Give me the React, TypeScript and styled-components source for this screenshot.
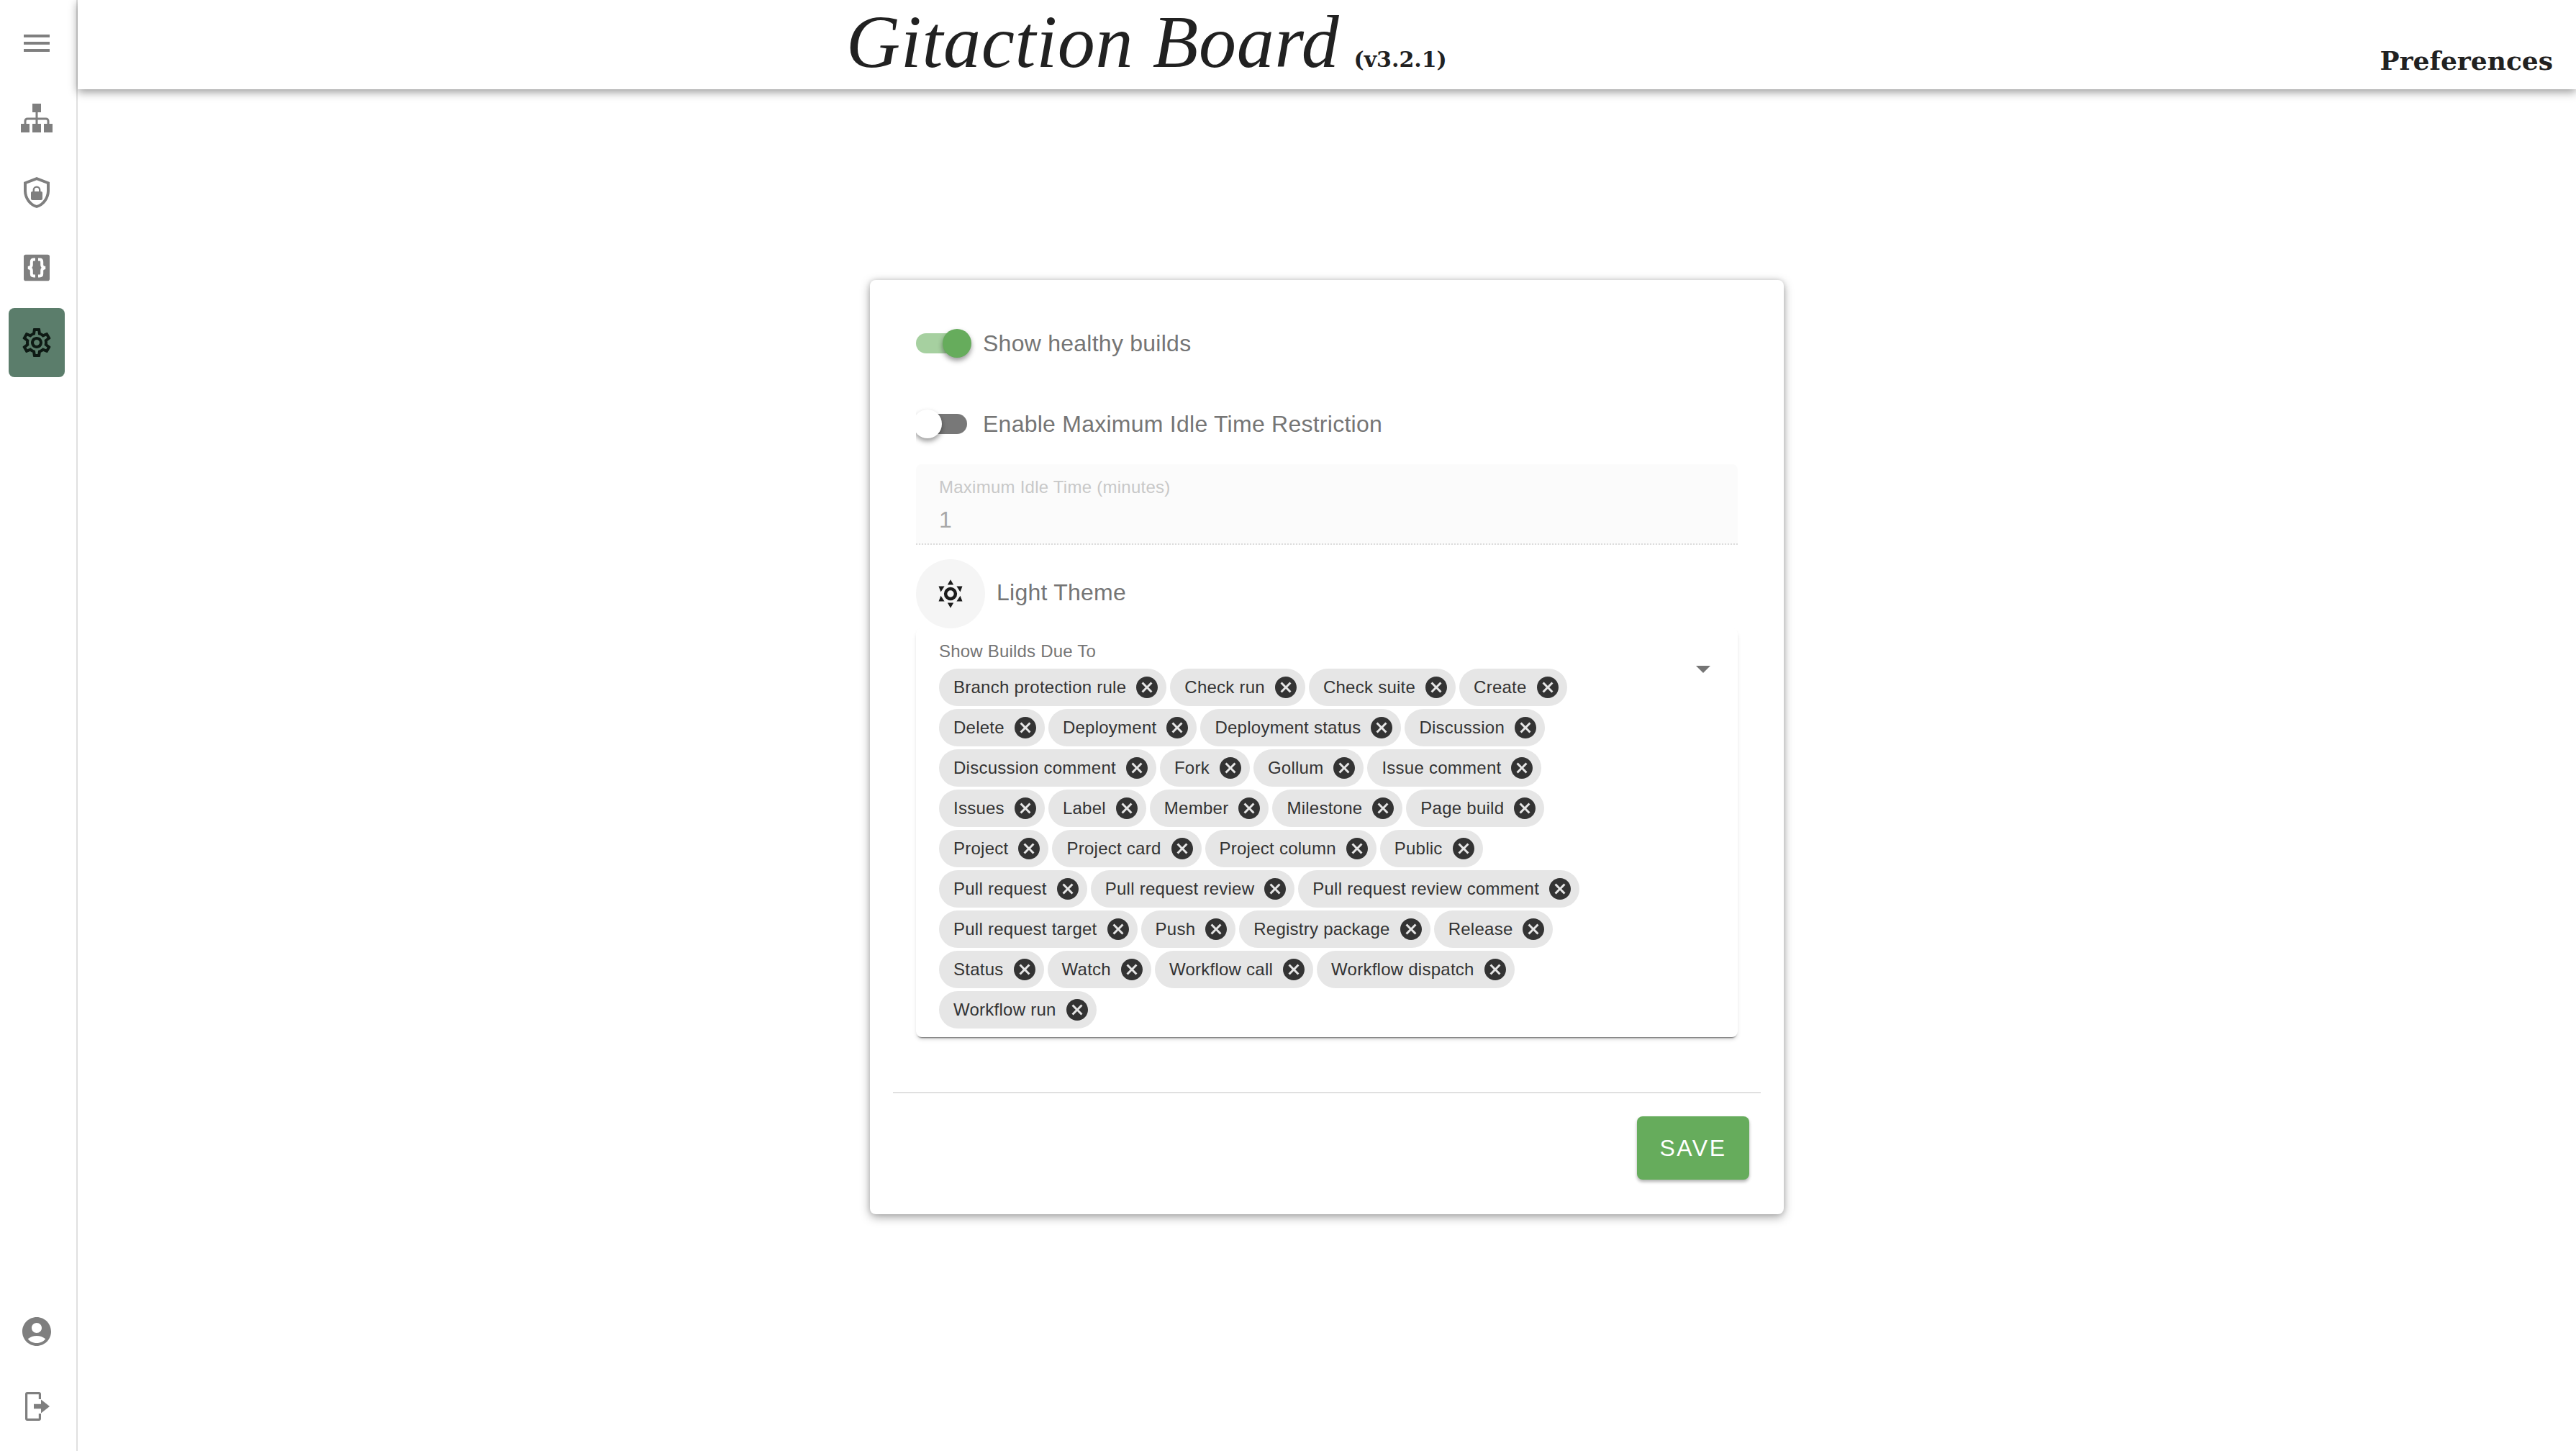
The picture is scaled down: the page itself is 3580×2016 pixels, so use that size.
import React from 'react';
import styled, { createGlobalStyle } from 'styled-components';
import {
  MdMenu,
  MdOutlineSettings,
  MdAccountCircle,
  MdCancel,
} from 'react-icons/md';

const GlobalStyle = createGlobalStyle`
  html, body {
    margin: 0;
    padding: 0;
    height: 100%;
    background: #fff;
    font-family: "Liberation Sans", Arial, sans-serif;
  }
`;

const EVENTS = [
  'Branch protection rule',
  'Check run',
  'Check suite',
  'Create',
  'Delete',
  'Deployment',
  'Deployment status',
  'Discussion',
  'Discussion comment',
  'Fork',
  'Gollum',
  'Issue comment',
  'Issues',
  'Label',
  'Member',
  'Milestone',
  'Page build',
  'Project',
  'Project card',
  'Project column',
  'Public',
  'Pull request',
  'Pull request review',
  'Pull request review comment',
  'Pull request target',
  'Push',
  'Registry package',
  'Release',
  'Status',
  'Watch',
  'Workflow call',
  'Workflow dispatch',
  'Workflow run',
];

function SitemapIcon() {
  return (
    <svg width="44" height="40" viewBox="0 0 44 40" fill="#7f7f7f">
      <rect x="16" y="0" width="12" height="12" />
      <rect x="0" y="28" width="12" height="12" />
      <rect x="16" y="28" width="12" height="12" />
      <rect x="32" y="28" width="12" height="12" />
      <path
        d="M22 12v16M6 28v-4a3 3 0 0 1 3-3h26a3 3 0 0 1 3 3v4"
        fill="none"
        stroke="#7f7f7f"
        strokeWidth="3"
      />
    </svg>
  );
}

function ShieldLockIcon() {
  return (
    <svg width="48" height="48" viewBox="0 0 24 24" fill="#7f7f7f">
      <path
        fillRule="evenodd"
        d="M12 1 3 4.500v6.100c0 5.300 3.800 10.600 9 11.900 5.200-1.300 9-6.600 9-11.900V4.500L12 1zm0 2.100 7 2.700v4.800c0 4.300-3 8.800-7 9.900-4-1.100-7-5.600-7-9.900V5.800l7-2.700z"
      />
      <path
        fillRule="evenodd"
        d="M9.300 11V9.900a2.700 2.700 0 0 1 5.400 0V11h.3c.6 0 1 .4 1 1v4c0 .6-.4 1-1 1H9c-.6 0-1-.4-1-1v-4c0-.6.4-1 1-1h.3zm1.200 0h3V9.900a1.500 1.500 0 0 0-3 0V11z"
      />
    </svg>
  );
}

function BracesIcon() {
  return (
    <svg width="48" height="48" viewBox="0 0 24 24">
      <rect x="3" y="2.900" width="18" height="18.200" rx="1.400" fill="#7f7f7f" />
      <path
        d="M11 6.300h-1c-1 0-1.600.6-1.600 1.600v2.200c0 .9-.7 1.700-2.400 1.900 1.700.2 2.400 1 2.400 1.900v2.200c0 1 .6 1.600 1.600 1.600h1M13 6.300h1c1 0 1.600.6 1.600 1.600v2.200c0 .9.7 1.700 2.400 1.900-1.700.2-2.400 1-2.400 1.900v2.200c0 1-.6 1.600-1.600 1.600h-1"
        fill="none"
        stroke="#fff"
        strokeWidth="2"
      />
    </svg>
  );
}

function LogoutIcon() {
  return (
    <svg width="48" height="48" viewBox="0 0 24 24" fill="#7f7f7f">
      <path d="M4 3.400c0-.8.6-1.400 1.400-1.400h8.200c.8 0 1.400.6 1.400 1.400V7h-1.600V3.600H5.600v16.800h7.800V17H15v3.600c0 .8-.6 1.400-1.400 1.400H5.400C4.600 22 4 21.400 4 20.600V3.400z" />
      <path d="M10 10.400h5V7.200l6 4.800-6 4.800v-3.200h-5z" />
    </svg>
  );
}

function SunIcon() {
  return (
    <svg width="36" height="40" viewBox="0 0 24 26.670" fill="#1c1c1c">
      <path d="M12 .2 14.800 5H9.200zM12 26.500 9.200 21.700h5.600zM1 6.300h5.400L3 11.600zM23 6.300h-5.400l3.400 5.300zM1 20.400h5.400L3 15.100zM23 20.400h-5.400l3.400-5.300z" />
      <circle cx="12" cy="13.350" r="4.600" fill="none" stroke="#1c1c1c" strokeWidth="3" />
    </svg>
  );
}

function Switch({ on }: { on: boolean }) {
  return (
    <SwitchRoot>
      <SwitchTrack $on={on} />
      <SwitchThumb $on={on} />
    </SwitchRoot>
  );
}

function App() {
  return (
    <>
      <GlobalStyle />
      <Page>
        <Sidebar>
          <SideGroup>
            <SideItem>
              <MdMenu size={48} />
            </SideItem>
            <SideItem>
              <SitemapIcon />
            </SideItem>
            <SideItem>
              <ShieldLockIcon />
            </SideItem>
            <SideItem>
              <BracesIcon />
            </SideItem>
            <SideItem $active>
              <MdOutlineSettings size={48} />
            </SideItem>
          </SideGroup>
          <SideGroup>
            <SideItem>
              <MdAccountCircle size={48} />
            </SideItem>
            <SideItem>
              <LogoutIcon />
            </SideItem>
          </SideGroup>
        </Sidebar>
        <Content>
          <AppBar>
            <Brand>
              <BrandName>Gitaction Board</BrandName>
              <Version>(v3.2.1)</Version>
            </Brand>
            <PageName>Preferences</PageName>
          </AppBar>
          <Main>
            <Card>
              <CardBody>
                <SwitchRow>
                  <Switch on />
                  <RowLabel>Show healthy builds</RowLabel>
                </SwitchRow>
                <SwitchRow>
                  <Switch on={false} />
                  <RowLabel>Enable Maximum Idle Time Restriction</RowLabel>
                </SwitchRow>
                <IdleField>
                  <IdleLabel>Maximum Idle Time (minutes)</IdleLabel>
                  <IdleValue>1</IdleValue>
                </IdleField>
                <ThemeRow>
                  <ThemeButton>
                    <SunIcon />
                  </ThemeButton>
                  <ThemeLabel>Light Theme</ThemeLabel>
                </ThemeRow>
                <SelectField>
                  <SelectLabel>Show Builds Due To</SelectLabel>
                  <SelectArrow />
                  <ChipList>
                    {EVENTS.map(name => (
                      <Chip key={name}>
                        <span>{name}</span>
                        <MdCancel size={36} />
                      </Chip>
                    ))}
                  </ChipList>
                </SelectField>
              </CardBody>
              <Divider />
              <CardActions>
                <SaveButton>SAVE</SaveButton>
              </CardActions>
            </Card>
          </Main>
        </Content>
      </Page>
    </>
  );
}

const Page = styled.div`
  display: flex;
  width: 3580px;
  height: 2016px;
  overflow: hidden;
  background: #fff;
`;
const Sidebar = styled.nav`
  display: flex;
  flex-direction: column;
  justify-content: space-between;
  flex: none;
  box-sizing: border-box;
  width: 108px;
  padding: 12px 0 14px;
  border-right: 2px solid #e0e0e0;
`;
const SideGroup = styled.div`
  display: flex;
  flex-direction: column;
  align-items: center;
  gap: 8px;
  width: 102px;
`;
const SideItem = styled.div<{ $active?: boolean }>`
  display: flex;
  align-items: center;
  justify-content: center;
  width: 78px;
  height: 96px;
  border-radius: 8px;
  color: ${p => (p.$active ? '#0e1a14' : '#7f7f7f')};
  background: ${p => (p.$active ? '#5b7d6b' : 'transparent')};
`;
const Content = styled.div`
  display: flex;
  flex-direction: column;
  flex: 1;
  min-width: 0;
`;
const AppBar = styled.header`
  display: flex;
  align-items: flex-end;
  justify-content: space-between;
  box-sizing: border-box;
  flex: none;
  height: 124px;
  padding: 0 32px 0 1068px;
  background: #fff;
  box-shadow: 0 4px 12px rgba(0, 0, 0, 0.4);
  color: #212121;
  position: relative;
`;
const Brand = styled.div`
  display: flex;
  align-items: baseline;
  height: 124px;
  white-space: nowrap;
`;
const BrandName = styled.span`
  font-family: "Liberation Serif", "Times New Roman", serif;
  font-style: italic;
  font-size: 104px;
  line-height: 116px;
  letter-spacing: 0.7px;
`;
const Version = styled.span`
  margin-left: 20px;
  font-family: "DejaVu Serif", serif;
  font-weight: 700;
  font-size: 30px;
`;
const PageName = styled.span`
  margin-bottom: 16px;
  font-family: "DejaVu Serif", serif;
  font-weight: 700;
  font-size: 36px;
  line-height: 48px;
`;
const Main = styled.main`
  display: flex;
  flex: 1;
  align-items: center;
  justify-content: center;
  padding-bottom: 64px;
`;
const Card = styled.section`
  box-sizing: border-box;
  width: 1270px;
  height: 1298px;
  border-radius: 8px;
  background: #fff;
  box-shadow: 0 4px 14px rgba(0, 0, 0, 0.35), 0 0 6px rgba(0, 0, 0, 0.12);
`;
const CardBody = styled.div`
  display: flex;
  flex-direction: column;
  padding: 32px 64px 0;
`;
const SwitchRow = styled.div`
  display: flex;
  align-items: center;
  height: 112px;
`;
const RowLabel = styled.span`
  font-size: 32px;
  line-height: 48px;
  letter-spacing: 0.25px;
  color: #757575;
`;
const ThemeLabel = styled(RowLabel)`
  margin-top: -4px;
`;
const SwitchRoot = styled.div`
  position: relative;
  flex: none;
  width: 93px;
  height: 100px;
  overflow: hidden;
`;
const SwitchTrack = styled.div<{ $on: boolean }>`
  position: absolute;
  left: 0;
  top: 36px;
  width: 71px;
  height: 28px;
  border-radius: 14px;
  background: ${p => (p.$on ? '#a6d0a0' : '#787878')};
`;
const SwitchThumb = styled.div<{ $on: boolean }>`
  position: absolute;
  left: ${p => (p.$on ? '37px' : '-4px')};
  top: 30px;
  width: 40px;
  height: 40px;
  border-radius: 50%;
  background: ${p => (p.$on ? '#66ac5c' : '#fff')};
  box-shadow: 0 4px 7px rgba(0, 0, 0, 0.4);
`;
const IdleField = styled.div`
  display: flex;
  flex-direction: column;
  box-sizing: border-box;
  height: 112px;
  padding: 18px 32px 0;
  border-radius: 8px 8px 0 0;
  border-bottom: 2px dotted #dcdcdc;
  background: #fbfbfb;
`;
const IdleLabel = styled.label`
  font-size: 24px;
  line-height: 28px;
  letter-spacing: 0.25px;
  color: #c8c8c8;
`;
const IdleValue = styled.div`
  margin-top: 12px;
  font-size: 32px;
  line-height: 38px;
  color: #a8a8a8;
`;
const ThemeRow = styled.div`
  display: flex;
  align-items: center;
  gap: 16px;
  margin-top: 20px;
  height: 96px;
`;
const ThemeButton = styled.div`
  display: flex;
  align-items: center;
  justify-content: center;
  width: 96px;
  height: 96px;
  border-radius: 50%;
  background: #f5f5f5;
`;
const SelectField = styled.div`
  position: relative;
  box-sizing: border-box;
  height: 568px;
  padding: 18px 164px 0 32px;
  border-radius: 8px;
  background: #fff;
  box-shadow: 0 3px 2px -2px rgba(0, 0, 0, 0.5), 0 4px 6px -2px rgba(0, 0, 0, 0.22);
`;
const SelectLabel = styled.label`
  display: block;
  font-size: 24px;
  line-height: 28px;
  letter-spacing: 0.2px;
  color: #757575;
`;
const SelectArrow = styled.div`
  position: absolute;
  right: 38px;
  top: 52px;
  width: 0;
  height: 0;
  border-left: 10px solid transparent;
  border-right: 10px solid transparent;
  border-top: 10px solid #757575;
`;
const ChipList = styled.div`
  display: flex;
  flex-wrap: wrap;
  gap: 4px 5px;
  margin-top: 10px;
`;
const Chip = styled.div`
  display: inline-flex;
  align-items: center;
  box-sizing: border-box;
  height: 52px;
  padding: 0 9px 0 20px;
  border-radius: 26px;
  background: #e6e6e6;
  font-size: 24px;
  letter-spacing: 0.25px;
  color: #333;
  svg {
    margin-left: 11px;
    color: #333;
  }
`;
const Divider = styled.hr`
  height: 2px;
  margin: 76px 32px 0;
  border: 0;
  background: #e0e0e0;
`;
const CardActions = styled.div`
  display: flex;
  justify-content: flex-end;
  padding: 32px 48px;
`;
const SaveButton = styled.button`
  width: 156px;
  height: 88px;
  border: 0;
  border-radius: 8px;
  background: #66ac5c;
  color: #fff;
  font-family: "Liberation Sans", Arial, sans-serif;
  font-size: 32px;
  letter-spacing: 2.5px;
  box-shadow: 0 3px 4px rgba(0, 0, 0, 0.3);
`;

export default App;
